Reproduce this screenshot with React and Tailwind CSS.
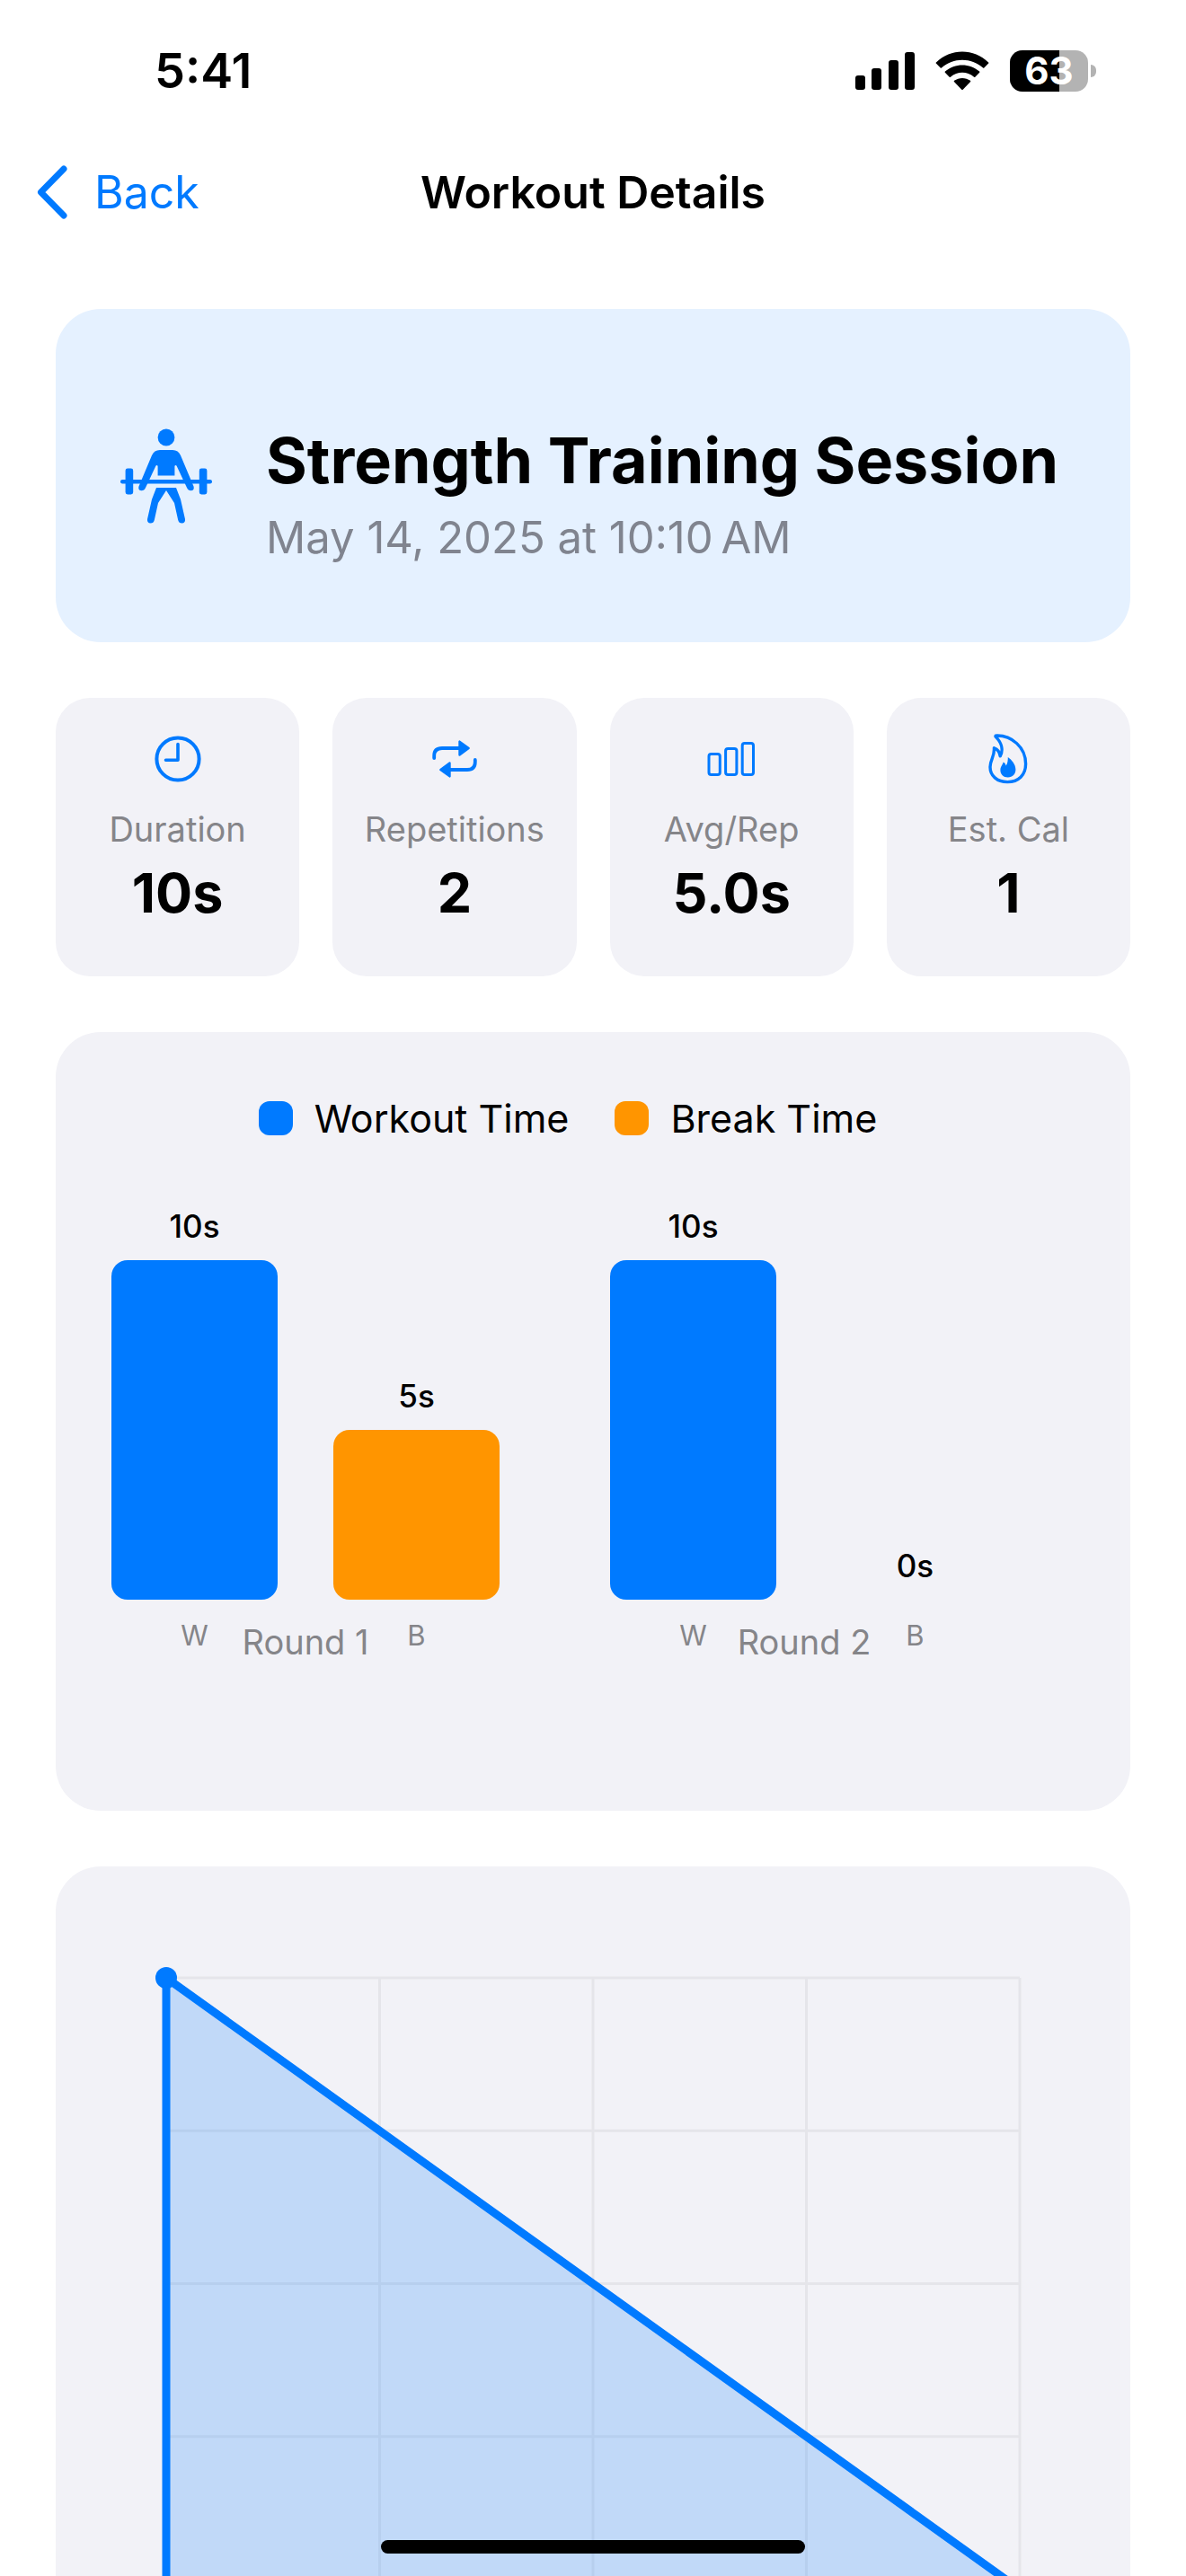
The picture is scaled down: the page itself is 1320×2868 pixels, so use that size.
const stats = [
  { label: 'Duration', value: '10s', icon: ClockIcon },
  { label: 'Repetitions', value: '2', icon: RepeatIcon },
  { label: 'Avg/Rep', value: '5.0s', icon: BarsIcon },
  { label: 'Est. Cal', value: '1', icon: FlameIcon },
]

const rounds = [
  { name: 'Round 1', workout: 10, rest: 5 },
  { name: 'Round 2', workout: 10, rest: 0 },
]

const MAX_SECONDS = 10
const BAR_HEIGHT = 378
const BATTERY = 63

function ClockIcon() {
  return (
    <svg width="52" height="52" viewBox="0 0 52 52" fill="none" stroke="currentColor" strokeWidth="4">
      <circle cx="26" cy="26" r="23.6" />
      <path d="M26 9.5V27.2H12.5" strokeWidth="3.6" strokeLinecap="round" strokeLinejoin="round" />
    </svg>
  )
}

function RepeatIcon() {
  return (
    <svg width="50" height="42" viewBox="0 0 50 42" fill="none" stroke="currentColor" strokeWidth="3.8" strokeLinecap="round">
      <path d="M2.2 20v-2.5Q2.2 9 11 9H30" />
      <path d="M30.5 1.6V16.6L40.6 9Z" fill="currentColor" strokeWidth="2.4" strokeLinejoin="round" />
      <path d="M47.8 22v2.5Q47.8 33 39 33H20" />
      <path d="M19.5 40.4V25.4L9.4 33Z" fill="currentColor" strokeWidth="2.4" strokeLinejoin="round" />
    </svg>
  )
}

function BarsIcon() {
  return (
    <svg width="54" height="38" viewBox="0 0 54 38" fill="none" stroke="currentColor" strokeWidth="3">
      <rect x="2" y="13.5" width="12.3" height="23" rx="2.6" />
      <rect x="20.6" y="7.5" width="12.3" height="29" rx="2.6" />
      <rect x="39.2" y="1.5" width="12.3" height="35" rx="2.6" />
    </svg>
  )
}

function FlameIcon() {
  return (
    <svg width="44" height="56" viewBox="0 0 44 56" fill="none">
      <path
        d="M8.8 2C26 1.5 41.6 15 41.6 33.5C41.6 46 33.5 53.6 21.3 53.6C9.5 53.6 2 46.5 2 37C2 28.5 7.2 25.5 6.4 15.8C10 17 12.6 20 13.2 24.8C17 18 14.8 10 8.3 3.4C7.6 2.5 8 2 8.8 2Z"
        stroke="currentColor"
        strokeWidth="3.4"
        strokeLinejoin="round"
      />
      <path
        d="M21.8 26C26 29 30.4 34 30.4 39.8C30.4 45 27 48.4 21.8 48.4C16.8 48.4 13.4 45 13.4 40.4C13.4 36.5 15.8 34.8 16.6 31.6C18.4 32.4 19.2 33.8 19.6 35.4C21.6 33 21.8 29.5 21.8 26Z"
        fill="currentColor"
      />
    </svg>
  )
}

function LifterIcon() {
  return (
    <svg className="shrink-0" width="102" height="106" viewBox="0 0 102 106" fill="currentColor">
      <circle cx="51" cy="10" r="9.4" />
      <path d="M44 24H58Q64.500 24 67 30L81.500 64.500Q82.600 69 78.500 69.200Q75.500 69.200 74 66L62.500 41.500Q61 40.500 60.400 42V52.500H41.600V42Q41 40.500 39.500 41.500L28 66Q26.500 69.200 23.500 69.200Q19.400 69 20.500 64.500L35 30Q37.500 24 44 24Z" />
      <rect x="0" y="57" width="102" height="4.400" rx="2.200" />
      <rect x="5.600" y="44.500" width="8.600" height="29" rx="2.400" />
      <rect x="87.800" y="44.500" width="8.600" height="29" rx="2.400" />
      <path d="M40 66H62L67 79L72 101Q72.400 105.400 68.500 105.600Q65 105.600 64.200 102L60 83L51 69L42 83L37.800 102Q37 105.600 33.500 105.600Q29.600 105.400 30 101L35 79Z" />
    </svg>
  )
}

function StatusBar() {
  return (
    <div className="flex h-[158px] items-center justify-between pl-[172px] pr-[100px]">
      <span className="text-[54px] font-semibold leading-[64px]">5:41</span>
      <div className="flex items-center">
        <svg width="68" height="44" viewBox="0 0 68 44">
          <rect x="1" y="27" width="11" height="16" rx="3" />
          <rect x="19" y="19" width="11" height="24" rx="3" />
          <rect x="38" y="10" width="11" height="33" rx="3" />
          <rect x="56" y="1" width="11" height="42" rx="3" />
        </svg>
        <svg className="ml-[22px]" width="60" height="44" viewBox="0 0 60 44">
          <path d="M.8 13.600Q.3 13 .9 12.400C17-3.600 43-3.600 59.100 12.400Q59.700 13 59.200 13.600L54.300 18.500Q53.700 19 53.100 18.500C40 6.800 20 6.800 6.900 18.500Q6.300 19 5.700 18.500Z" />
          <path d="M10.800 23.800Q10.300 23.200 10.900 22.600C22 13.200 38 13.200 49.100 22.600Q49.700 23.200 49.200 23.800L44.300 28.700Q43.700 29.200 43.100 28.700C35.500 22.200 24.500 22.200 16.900 28.700Q16.300 29.200 15.700 28.700Z" />
          <path d="M20.900 33.900Q20.400 33.300 21 32.800C26.300 28.900 33.700 28.900 39 32.800Q39.600 33.300 39.100 33.900L30.700 42.700Q30 43.300 29.300 42.700Z" />
        </svg>
        <div className="relative ml-[23px] flex h-[46px] w-[87px] items-center justify-center rounded-[14px] bg-[#b3b3b3]">
          <div className="absolute inset-y-0 left-0 rounded-l-[14px] bg-black" style={{ width: `${BATTERY}%` }} />
          <span className="relative text-[42px] font-bold leading-[52px] text-white">{BATTERY}</span>
        </div>
        <div className="ml-[3px] h-[14px] w-[6px] rounded-r-full bg-[#b3b3b3]" />
      </div>
    </div>
  )
}

function NavBar() {
  return (
    <header className="grid h-[112px] grid-cols-[1fr_auto_1fr] items-center">
      <button type="button" className="flex items-center pl-[41px] text-[50px] leading-[60px] text-[#007aff]">
        <svg width="34" height="60" viewBox="0 0 34 60" fill="none" stroke="currentColor" strokeWidth="7" strokeLinecap="round" strokeLinejoin="round">
          <path d="M30 4L4.500 30L30 56" />
        </svg>
        <span className="ml-[30px]">Back</span>
      </button>
      <h1 className="text-[50px] font-semibold leading-[60px]">Workout Details</h1>
    </header>
  )
}

function SessionCard() {
  return (
    <section className="flex items-center gap-[60px] rounded-[50px] bg-[#e5f1ff] px-[72px] py-[86px]">
      <span className="text-[#007aff]">
        <LifterIcon />
      </span>
      <div className="whitespace-nowrap pt-10">
        <h2 className="text-[70px] font-bold leading-[86px]">Strength Training Session</h2>
        <p className="mt-[13px] text-[49px] leading-[60px] text-[#80848f]">May 14, 2025 at 10:10{'\u202f'}AM</p>
      </div>
    </section>
  )
}

function StatCard({ label, value, icon: Icon }) {
  return (
    <div className="flex flex-col items-center rounded-[38px] bg-[#f2f2f7] pb-14 pt-10">
      <span className="flex h-14 items-center text-[#007aff]">
        <Icon />
      </span>
      <span className="mt-7 text-[38px] leading-[44px] text-[#858589]">{label}</span>
      <span className="mt-3 text-[61px] font-bold leading-[74px]">{value}</span>
    </div>
  )
}

function LegendItem({ color, label }) {
  return (
    <div className="flex items-center gap-6">
      <span className={`size-[38px] rounded-[12px] ${color}`} />
      <span className="text-[43px] leading-[54px]">{label}</span>
    </div>
  )
}

function Bar({ seconds, color }) {
  return (
    <div className="flex w-[185px] flex-col items-center">
      <span className="mb-[17px] text-[35px] font-medium leading-[42px]">{seconds}s</span>
      <div className={`w-full rounded-[18px] ${color}`} style={{ height: (seconds / MAX_SECONDS) * BAR_HEIGHT }} />
    </div>
  )
}

function RoundsChart() {
  return (
    <section className="rounded-[50px] bg-[#f2f2f7] pb-[166px] pl-[62px] pt-[69px]">
      <div className="flex justify-center gap-[51px] pr-[118px]">
        <LegendItem color="bg-[#007aff]" label="Workout Time" />
        <LegendItem color="bg-[#ff9500]" label="Break Time" />
      </div>
      <div className="mt-[72px] flex gap-[123px]">
        {rounds.map((round) => (
          <div key={round.name}>
            <div className="flex items-end gap-[62px]">
              <Bar seconds={round.workout} color="bg-[#007aff]" />
              <Bar seconds={round.rest} color="bg-[#ff9500]" />
            </div>
            {/* round name shares the row with the W / B letters */}
            <div className="mt-[21px] grid text-[#858589]">
              <div className="col-start-1 row-start-1 flex gap-[62px] text-center text-[31px] leading-[38px]">
                <span className="w-[185px]">W</span>
                <span className="w-[185px]">B</span>
              </div>
              <span className="col-start-1 row-start-1 pt-1 text-center text-[38px] leading-[44px]">{round.name}</span>
            </div>
          </div>
        ))}
      </div>
    </section>
  )
}

function TrendChart() {
  const steps = [0, 1, 2, 3, 4]
  const w = 950
  const h = 681

  return (
    <section className="rounded-t-[50px] bg-[#f2f2f7] px-[111px] pb-28 pt-28">
      <svg className="w-full" viewBox={`-12 -12 ${w + 24} ${h + 24}`} fill="none">
        {steps.map((i) => (
          <g key={i} stroke="#e5e5ea" strokeWidth="3">
            <line x1="0" x2={w} y1={(h / 4) * i} y2={(h / 4) * i} />
            <line x1={(w / 4) * i} x2={(w / 4) * i} y1="0" y2={h} />
          </g>
        ))}
        <path d={`M0 0L${w} ${h}H0Z`} fill="#007aff" fillOpacity="0.2" />
        <path d={`M0 ${h}V0L${w} ${h}`} stroke="#007aff" strokeWidth="9" />
        <circle cx="0" cy="0" r="12" fill="#007aff" />
      </svg>
    </section>
  )
}

export default function App() {
  return (
    <div className="relative flex h-screen flex-col overflow-hidden bg-white font-[Inter,'Liberation_Sans',sans-serif] text-black">
      <StatusBar />
      <NavBar />
      <main className="flex min-h-0 flex-1 flex-col gap-[62px] overflow-hidden px-[62px] pt-[74px] *:shrink-0">
        <SessionCard />
        <div className="grid grid-cols-4 gap-[37px]">
          {stats.map((stat) => (
            <StatCard key={stat.label} {...stat} />
          ))}
        </div>
        <RoundsChart />
        <TrendChart />
      </main>
      <div className="absolute bottom-[25px] left-1/2 h-[15px] w-[472px] -translate-x-1/2 rounded-full bg-black" />
    </div>
  )
}
